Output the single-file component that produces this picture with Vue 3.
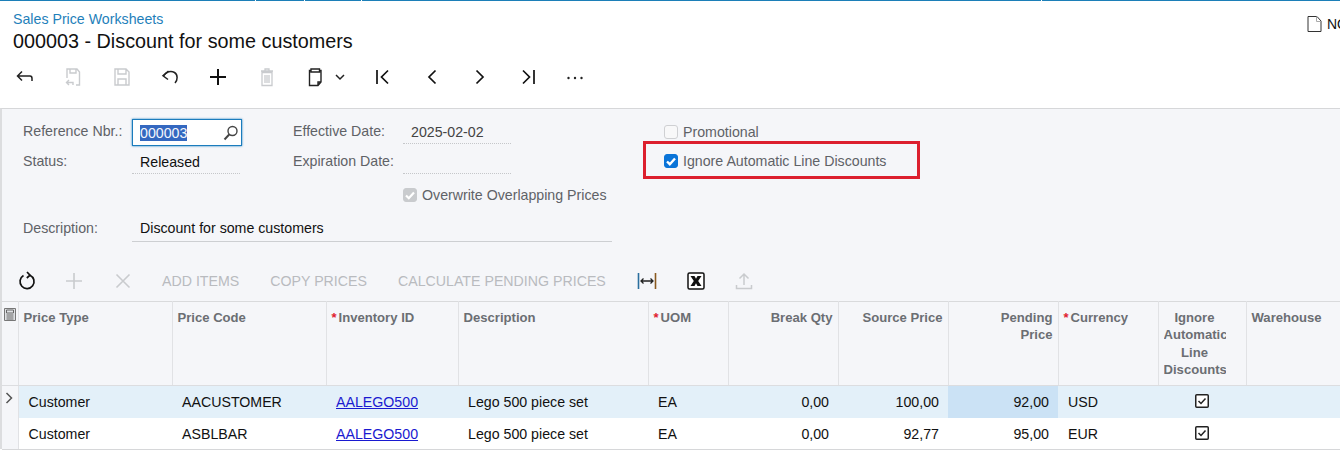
<script setup>
const columns = [
  { label: 'Price Type', width: 154 },
  { label: 'Price Code', width: 154 },
  { label: 'Inventory ID', width: 132, req: true },
  { label: 'Description', width: 190 },
  { label: 'UOM', width: 80, req: true },
  { label: 'Break Qty', width: 110, right: true },
  { label: 'Source Price', width: 110, right: true },
  { label: 'Pending Price', width: 110, right: true, narrow: true },
  { label: 'Currency', width: 100, req: true },
  { label: 'Ignore Automatic Line Discounts', width: 88, clip: true },
  { label: 'Warehouse', width: 94 },
]
const rows = [
  { type: 'Customer', code: 'AACUSTOMER', qty: '0,00', src: '100,00', pend: '92,00', cur: 'USD', active: true },
  { type: 'Customer', code: 'ASBLBAR', qty: '0,00', src: '92,77', pend: '95,00', cur: 'EUR', active: false },
]
</script>

<template>
  <div class="page">
    <div class="topline"><i></i><i></i><i></i><i></i><i></i></div>
    <header class="head">
      <div class="titles">
        <a class="crumb">Sales Price Worksheets</a>
        <h1>000003 - Discount for some customers</h1>
      </div>
      <div class="notes">
        <svg width="15" height="16" viewBox="0 0 15 16" fill="none" stroke="#333" stroke-width="1"><path d="M1 .5h9l4 4.500v10.500H1z"/><path d="M9.500 .5v5h4.500" stroke="#aaa"/></svg>
        <span>NOTES</span>
      </div>
    </header>

    <nav class="tools">
      <button class="tb">
        <svg width="20" height="20" viewBox="0 0 20 20" fill="none" stroke="#222" stroke-width="1.500"><path d="M7 4.500 2.500 9 7 13.500M3 9h12c1.500 0 2 1 2 2.500V14"/></svg>
      </button>
      <button class="tb">
        <svg width="20" height="20" viewBox="0 0 20 20" fill="none" stroke="#c9cbce" stroke-width="1.400"><path d="M13 18h3.500V5L14 2H4v9M7 2v4h6V2M6 13l-2.500 2.500L6 18M4 15.500h6v2.500"/></svg>
      </button>
      <button class="tb">
        <svg width="20" height="20" viewBox="0 0 20 20" fill="none" stroke="#c9cbce" stroke-width="1.400"><path d="M3 2h11l3 3v13H3zM6 2v5h8V2M6 18v-6h8v6"/></svg>
      </button>
      <button class="tb">
        <svg width="20" height="20" viewBox="0 0 20 20" fill="none" stroke="#222" stroke-width="1.500"><path d="M8.500 4 3 8.800l5 3.700"/><path d="M3.500 9C6 4.500 11 3.500 14.500 5.500c3.500 2.200 3.300 7.500.5 10.500"/></svg>
      </button>
      <button class="tb">
        <svg width="20" height="20" viewBox="0 0 20 20" fill="none" stroke="#111" stroke-width="2"><path d="M10 2v16M2 10h16"/></svg>
      </button>
      <button class="tb">
        <svg width="20" height="20" viewBox="0 0 20 20" fill="none" stroke="#c9cbce" stroke-width="1.300"><path d="M5 5.500h10V18.500H5zM4 4h12M8 4V2h4v2M8 8v8M10 8v8M12 8v8"/></svg>
      </button>
      <button class="tb wide">
        <svg width="20" height="20" viewBox="0 0 20 20" fill="none" stroke="#222" stroke-width="1.400"><path d="M6 3.500H4.500v15H13l3-3.500V3.500h-1.500M6 2h8.500v3H6zM13 18.500V15h3"/></svg>
        <svg class="chev" width="10" height="8" viewBox="0 0 10 8" fill="none" stroke="#222" stroke-width="1.500"><path d="m1 2 4 4 4-4"/></svg>
      </button>
      <button class="tb">
        <svg width="20" height="20" viewBox="0 0 20 20" fill="none" stroke="#111" stroke-width="1.700"><path d="M4 3v14M15 3.500 8.500 10l6.500 6.500"/></svg>
      </button>
      <button class="tb">
        <svg width="20" height="20" viewBox="0 0 20 20" fill="none" stroke="#111" stroke-width="1.700"><path d="M13.500 3.500 7 10l6.500 6.500"/></svg>
      </button>
      <button class="tb">
        <svg width="20" height="20" viewBox="0 0 20 20" fill="none" stroke="#111" stroke-width="1.700"><path d="M6.500 3.500 13 10l-6.500 6.500"/></svg>
      </button>
      <button class="tb">
        <svg width="20" height="20" viewBox="0 0 20 20" fill="none" stroke="#111" stroke-width="1.700"><path d="M16 3v14M5 3.500l6.500 6.500L5 16.500"/></svg>
      </button>
      <button class="tb">
        <svg width="20" height="20" viewBox="0 0 20 20" fill="#222"><circle cx="1.500" cy="11" r="1.200"/><circle cx="8" cy="11" r="1.200"/><circle cx="14.500" cy="11" r="1.200"/></svg>
      </button>
    </nav>

    <main class="panel">
      <section class="form">
        <label class="lbl">Reference Nbr.:</label>
        <div class="selector"><span class="sel">000003</span>
          <svg width="16" height="16" viewBox="0 0 16 16" fill="none" stroke="#444" stroke-width="1.400"><circle cx="9.500" cy="6" r="4.500"/><path d="M6.200 9.500 1.500 14.500" stroke-width="2"/></svg>
        </div>
        <div></div>
        <label class="lbl">Effective Date:</label>
        <div class="val dot grey short">2025-02-02</div>
        <div></div>
        <div class="chk"><span class="box"></span>Promotional</div>

        <label class="lbl">Status:</label>
        <div class="val dot">Released</div>
        <div></div>
        <label class="lbl">Expiration Date:</label>
        <div class="val dot short"></div>
        <div></div>
        <div class="chk second"><span class="box on">
          <svg width="14" height="14" viewBox="0 0 14 14" fill="none" stroke="#fff" stroke-width="2.400"><path d="m3 7.500 2.800 2.700L11 4.500"/></svg>
        </span>Ignore Automatic Line Discounts<span class="redbox"></span></div>

        <div class="overwrite"><span class="box dis">
          <svg width="14" height="14" viewBox="0 0 14 14" fill="none" stroke="#fff" stroke-width="2.200"><path d="m3 7.500 2.800 2.700L11 4.500"/></svg>
        </span>Overwrite Overlapping Prices</div>

        <label class="lbl desc">Description:</label>
        <div class="val line">Discount for some customers</div>
      </section>

      <section class="gridtools">
        <button class="gi first">
          <svg width="20" height="20" viewBox="0 0 20 20" fill="none" stroke="#111" stroke-width="1.700"><path d="M6.500 4.500a7 7 0 1 0 6.500-.3"/><path d="m10 1 3 3.200L9.800 7"/></svg>
        </button>
        <button class="gi">
          <svg width="20" height="20" viewBox="0 0 20 20" fill="none" stroke="#c9cbce" stroke-width="1.600"><path d="M10 2v16M2 10h16"/></svg>
        </button>
        <button class="gi">
          <svg width="20" height="20" viewBox="0 0 20 20" fill="none" stroke="#c9cbce" stroke-width="1.600"><path d="m3.500 3.500 13 13M16.500 3.500l-13 13"/></svg>
        </button>
        <span class="gt g1">ADD ITEMS</span>
        <span class="gt g2">COPY PRICES</span>
        <span class="gt g3">CALCULATE PENDING PRICES</span>
        <button class="gi fit">
          <svg width="20" height="20" viewBox="0 0 20 20" fill="none" stroke="#222" stroke-width="1.300"><path d="M1.500 2v16" stroke="#2a6f9e" stroke-width="1.600"/><path d="M18.500 2v16" stroke="#8a5a20" stroke-width="1.600"/><path d="M4 10h12M6.500 7.500 4 10l2.500 2.500M13.500 7.500 16 10l-2.500 2.500"/></svg>
        </button>
        <button class="gi">
          <svg width="18" height="18" viewBox="0 0 18 18"><rect x="1" y="1" width="16" height="16" rx="1.500" fill="#fff" stroke="#111" stroke-width="1.500"/><path d="M3.500 4h4L9 6.800 10.500 4h4l-3.300 5 3.300 5h-4L9 11.200 7.500 14h-4l3.300-5z" fill="#111"/></svg>
        </button>
        <button class="gi">
          <svg width="20" height="20" viewBox="0 0 20 20" fill="none" stroke="#c9cbce" stroke-width="1.500"><path d="M10 14V3M5.500 7.500 10 3l4.500 4.500M2.500 14v3.500h15V14"/></svg>
        </button>
      </section>

      <table class="grid">
        <colgroup>
          <col class="selcol" />
          <col v-for="c in columns" :key="c.label" :style="{ width: c.width + 'px' }" />
        </colgroup>
        <thead>
          <tr>
            <th class="corner">
              <svg width="12" height="13" viewBox="0 0 12 13"><path d="M.500 .500h11v12H.500z" fill="#dfe1e4" stroke="#777"/><path d="M2.500 2h7v3h-7zM2.500 7h7M2.500 9h7M2.500 11h7" fill="none" stroke="#666"/></svg>
            </th>
            <th v-for="c in columns" :key="c.label" :class="{ right: c.right, narrow: c.narrow }">
              <div v-if="c.clip" class="clip">{{ c.label }}</div>
              <template v-else><span v-if="c.req" class="req">*</span>{{ c.label }}</template>
            </th>
          </tr>
        </thead>
        <tbody>
          <tr v-for="r in rows" :key="r.code" :class="{ active: r.active }">
            <td class="rowsel">
              <svg v-if="r.active" width="8" height="12" viewBox="0 0 8 12" fill="none" stroke="#555" stroke-width="1.500"><path d="m1.500 1 5 5-5 5"/></svg>
            </td>
            <td>{{ r.type }}</td>
            <td>{{ r.code }}</td>
            <td><a class="link">AALEGO500</a></td>
            <td>Lego 500 piece set</td>
            <td>EA</td>
            <td class="right">{{ r.qty }}</td>
            <td class="right">{{ r.src }}</td>
            <td class="right" :class="{ focus: r.active }">{{ r.pend }}</td>
            <td>{{ r.cur }}</td>
            <td class="center">
              <svg width="14" height="14" viewBox="0 0 14 14" fill="#fff" stroke="#222"><rect x=".75" y=".75" width="12.500" height="12.500" rx="1" stroke-width="1.500"/><path d="m3.500 7 2.500 2.500 4.500-5" fill="none" stroke-width="1.500"/></svg>
            </td>
            <td></td>
          </tr>
        </tbody>
      </table>
    </main>
  </div>
</template>

<style>
html, body { margin: 0; background: #fff; overflow: hidden; }
</style>

<style scoped>
.page {
  width: 1340px;
  height: 475px;
  overflow: hidden;
  font-family: "Liberation Sans", Arial, sans-serif;
  font-size: 14.200px;
  color: #111;
  background: #fff;
}
.topline { display: flex; gap: 1px; height: 1px; }
.topline i { background: #1c7fb8; flex: 1; }
.topline i:nth-child(1) { flex: 0 0 255px; }
.topline i:nth-child(2) { flex: 0 0 48px; }
.topline i:nth-child(3) { flex: 0 0 56px; }
.topline i:nth-child(4) { flex: 0 0 679px; }
.head { display: flex; justify-content: space-between; height: 55px; padding: 11px 0 0 13px; box-sizing: border-box; }
.crumb { display: block; color: #1f7fba; font-size: 14.200px; line-height: 15px; }
h1 { margin: 4px 0 0; font-size: 19.800px; line-height: 21px; font-weight: 400; color: #111; }
.notes { display: flex; gap: 5px; align-items: flex-start; padding-top: 4px; margin-right: -37px; width: 70px; font-size: 14px; flex: none; }
.tools { display: flex; height: 52px; align-items: flex-start; padding: 11px 0 0 1px; box-sizing: border-box; }
button { background: none; border: 0; padding: 0; margin: 0; display: flex; align-items: center; justify-content: center; }
.tb { width: 48.300px; height: 20px; }
.tb.wide { width: 68.500px; justify-content: flex-start; padding-left: 14px; box-sizing: border-box; }
.chev { margin-left: 10px; }
.panel { background: #fff; border-top: 1px solid #d6d7d9; border-left: 2px solid #dcdddf; height: 341px; box-sizing: border-box; }
.form {
  display: grid;
  grid-template-columns: 109px 108px 53px 110px 209px 52px 1fr;
  grid-template-rows: 30px 30px 36px 33px;
  padding: 8px 0 0 21px;
  height: 155px;
  box-sizing: border-box;
  color: #111;
  background: #f5f6f9;
}
.lbl { color: #5f6267; line-height: 29px; }
.selector {
  display: flex; align-items: center; justify-content: space-between;
  height: 27px; width: 110px; box-sizing: border-box; margin: 2px 0 0;
  border: 1px solid #1b7cbd; box-shadow: 0 0 2px #1b7cbd; background: #fff; padding: 0 2px 0 7px;
  line-height: 18px;
}
.sel { background: #3468c0; color: #f4f7fc; line-height: 16px; }
.val { height: 27px; line-height: 31px; padding-left: 8px; box-sizing: border-box; }
.short { width: 108px; }
.grey { color: #444; }
.dot { border-bottom: 1px dotted #c5c7ca; }
.chk { position: relative; display: flex; align-items: center; gap: 5px; color: #5f6267; height: 30px; grid-column: 7; white-space: nowrap; }
.chk.second { height: 28px; }
.box { width: 14px; height: 14px; border: 1px solid #cfd0d3; border-radius: 3px; box-sizing: border-box; background: #f8f8f9; display: inline-flex; align-items: center; justify-content: center; flex: none; }
.box svg { flex: none; }
.box.on { background: #0a74d8; border-color: #0a74d8; }
.box.dis { background: #c9cbce; border-color: #c9cbce; }
.redbox { position: absolute; left: -21px; top: -6px; width: 277px; height: 38px; border: 3px solid #dc1f2e; box-sizing: border-box; }
.overwrite { grid-column: 5 / 7; grid-row: 3; display: flex; align-items: center; gap: 5px; color: #5f6267; height: 28px; padding-top: 4px; box-sizing: content-box; white-space: nowrap; }
.desc { grid-column: 1; grid-row: 4; padding-top: 1px; }
.line { grid-column: 2 / 6; grid-row: 4; height: 29px; line-height: 30px; border-bottom: 1px solid #cdcfd2; }
.gridtools { display: flex; align-items: center; height: 37px; padding-bottom: 3px; box-sizing: border-box; background: #f5f6f9; }
.gi { width: 48.500px; height: 20px; flex: none; }
.gi.first { width: 48px; padding-left: 2px; box-sizing: border-box; }
.gi.fit { margin-left: 17px; }
.gt { color: #b9bbbf; white-space: nowrap; }
.g1 { margin-left: 15px; }
.g2 { margin-left: 31px; }
.g3 { margin-left: 31px; }
.grid { table-layout: fixed; border-collapse: collapse; width: 1338px; background: #fff; }
.selcol { width: 16px; }
th {
  height: 84px; box-sizing: border-box; vertical-align: top; text-align: left;
  padding: 7px 5px 0 5px; font-size: 13.100px; line-height: 17.300px; font-weight: 700; color: #6b6e73;
  background: #f5f6f9; border-top: 1px solid #d9dadc; border-bottom: 1px solid #dcdde0; border-right: 1px solid #e1e2e5;
  overflow: hidden;
}
th.right { text-align: right; }
th.narrow { padding-left: 40px; }
.corner { padding: 6px 0 0 2px; }
.req { color: #e0202f; font-size: 13px; margin-right: 2px; font-weight: 700; }
.clip { width: 62px; overflow: hidden; text-align: center; }
td {
  height: 32px; padding: 0 10px; box-sizing: border-box; white-space: nowrap; overflow: hidden;
  color: #111; background: #fff;
}
tbody tr:last-child td { border-bottom: 1px solid #d6d7d9; height: 32px; padding-top: 1px; }
tr.active td { background: #e3f0f9; }
td.right { text-align: right; padding-right: 9px; }
td.center { text-align: center; padding: 0 0 4px 0; }
td.center svg { vertical-align: middle; }
td.focus, tr.active td.focus { background: #cbe2f5; }
td.rowsel, tr.active td.rowsel { background: #f5f6f9; border-right: 1px solid #e1e2e5; padding: 0 0 6px 3px; }
.link { color: #1a1ad0; text-decoration: underline; }
</style>
